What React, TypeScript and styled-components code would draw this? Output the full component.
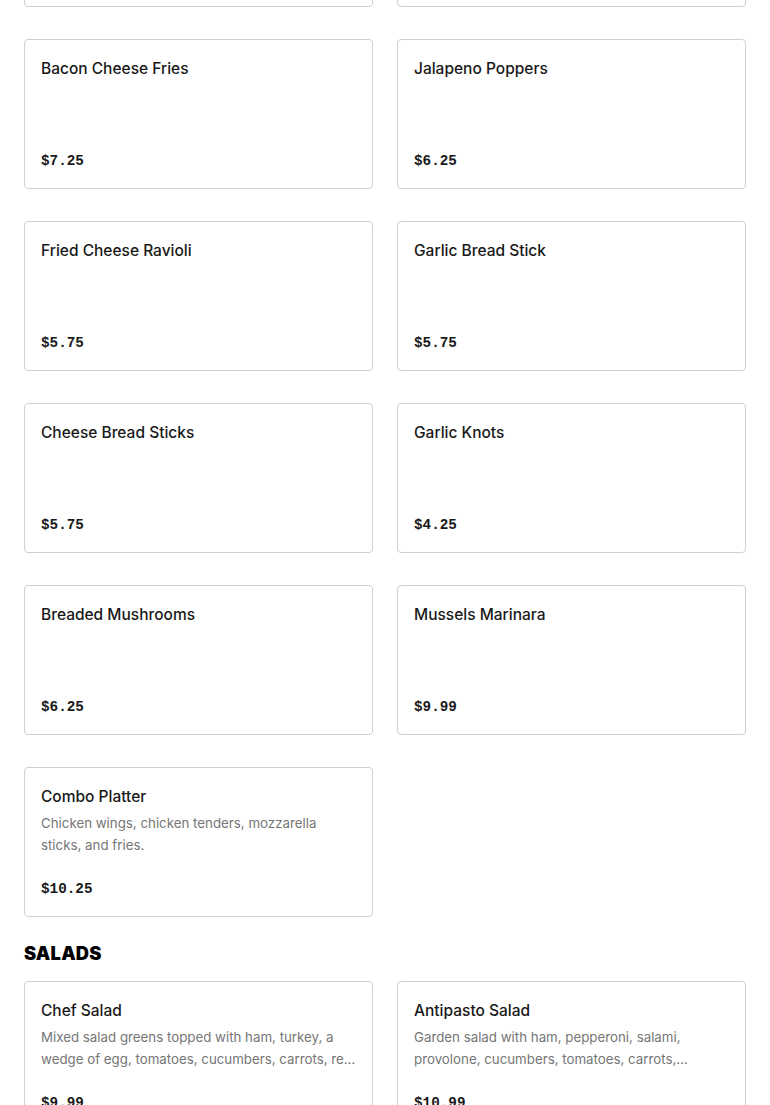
import styled, { createGlobalStyle } from 'styled-components';

const Global = createGlobalStyle`
    body {
        margin: 0;
        background: #ffffff;
        font-family: Inter, "Liberation Sans", sans-serif;
        color: #191919;
    }
`;

// the view is scrolled: the first row of cards sits mostly above the top edge
const Page = styled.div`
    padding: 0 24px;
    margin-top: -143px;
`;

const Section = styled.section`
    margin-bottom: 24px;
`;

const Heading = styled.h2`
    margin: 0 0 16px;
    font-size: 18.3px;
    line-height: 24px;
    font-weight: 900;
    letter-spacing: 0.2px;
    text-transform: uppercase;
    color: #000;
`;

const Grid = styled.div`
    display: grid;
    grid-template-columns: 1fr 1fr;
    column-gap: 24px;
    row-gap: 32px;
`;

const Card = styled.div`
    display: flex;
    flex-direction: column;
    height: 150px;
    box-sizing: border-box;
    padding: 16px;
    border: 1px solid #d0d0d0;
    border-radius: 4px;
    background: #fff;
`;

const Title = styled.span`
    font-size: 15.5px;
    line-height: 25px;
    font-weight: 500;
    color: #191919;
`;

const Desc = styled.p`
    margin: 3px 0 0;
    font-size: 13.3px;
    line-height: 22px;
    color: #767676;
    display: -webkit-box;
    -webkit-line-clamp: 2;
    -webkit-box-orient: vertical;
    overflow: hidden;
`;

const Price = styled.span`
    margin-top: auto;
    font-family: "Liberation Mono", "DejaVu Sans Mono", monospace;
    font-size: 14.3px;
    line-height: 21px;
    font-weight: 700;
    color: #191919;
`;

interface Item {
    name: string;
    price: string;
    desc?: string;
}

const appetizers: Item[] = [
    { name: 'Mozzarella Sticks', price: '$6.75' },
    { name: 'Chicken Wings', price: '$9.99' },
    { name: 'Bacon Cheese Fries', price: '$7.25' },
    { name: 'Jalapeno Poppers', price: '$6.25' },
    { name: 'Fried Cheese Ravioli', price: '$5.75' },
    { name: 'Garlic Bread Stick', price: '$5.75' },
    { name: 'Cheese Bread Sticks', price: '$5.75' },
    { name: 'Garlic Knots', price: '$4.25' },
    { name: 'Breaded Mushrooms', price: '$6.25' },
    { name: 'Mussels Marinara', price: '$9.99' },
    { name: 'Combo Platter', price: '$10.25', desc: 'Chicken wings, chicken tenders, mozzarella sticks, and fries.' },
];

const salads: Item[] = [
    { name: 'Chef Salad', price: '$9.99', desc: 'Mixed salad greens topped with ham, turkey, a wedge of egg, tomatoes, cucumbers, carrots, red onions, and provolone cheese.' },
    { name: 'Antipasto Salad', price: '$10.99', desc: 'Garden salad with ham, pepperoni, salami, provolone, cucumbers, tomatoes, carrots, pepperoncini and black olives.' },
    { name: 'Garden Salad', price: '$6.99', desc: 'Mixed salad greens, tomatoes, cucumbers, carrots and red onions.' },
    { name: 'Greek Salad', price: '$8.99', desc: 'Mixed salad greens, feta cheese, olives, tomatoes, cucumbers and red onions.' },
];

function MenuCard({ item }: { item: Item }) {
    return <Card>
        <Title>{item.name}</Title>
        {item.desc && <Desc>{item.desc}</Desc>}
        <Price>{item.price}</Price>
    </Card>
}

export default function App() {
    return <>
        <Global />
        <Page>
            <Section>
                <Grid>
                    {appetizers.map(i => <MenuCard key={i.name} item={i} />)}
                </Grid>
            </Section>
            <Section>
                <Heading>Salads</Heading>
                <Grid>
                    {salads.map(i => <MenuCard key={i.name} item={i} />)}
                </Grid>
            </Section>
        </Page>
    </>
}
